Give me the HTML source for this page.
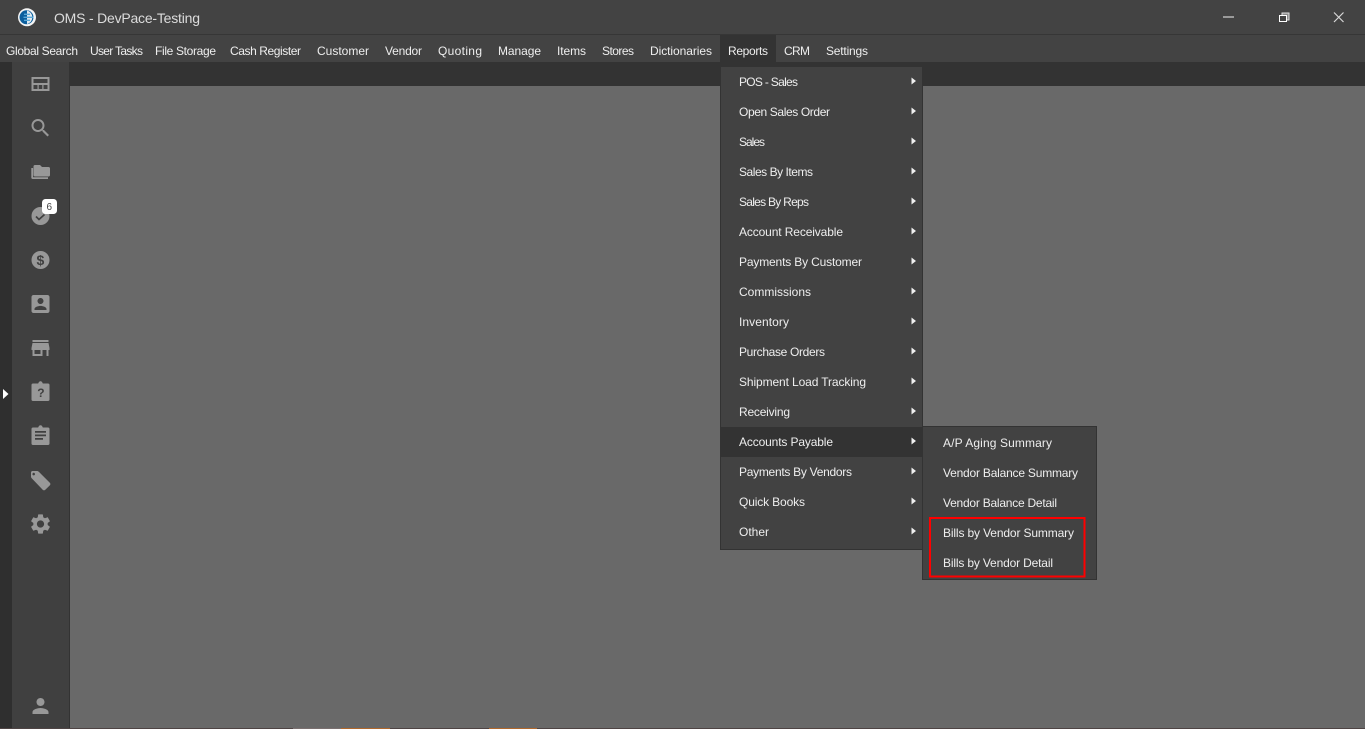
<!DOCTYPE html>
<html><head><meta charset="utf-8"><title>OMS - DevPace-Testing</title>
<style>
html,body{margin:0;padding:0;background:#696969;width:1365px;height:729px;overflow:hidden}
svg{display:block}
text{font-family:"Liberation Sans",sans-serif;font-size:12px;fill:#eeeeee}
.i{fill:#989898}
</style></head><body>
<svg width="1365" height="729" viewBox="0 0 1365 729" xmlns="http://www.w3.org/2000/svg">
<rect width="1365" height="729" fill="#696969"/>
<rect width="1365" height="34" fill="#434343"/>
<rect y="34" width="1365" height="1" fill="#363636"/>
<rect y="35" width="1365" height="27" fill="#434343"/>
<rect y="62" width="1365" height="24" fill="#333333"/>
<rect y="62" width="12" height="667" fill="#2f2f2f"/>
<rect x="12" y="62" width="57" height="667" fill="#404040"/>
<rect x="69" y="62" width="1" height="667" fill="#333333"/>
<rect y="728" width="1365" height="1" fill="#4e4444"/>
<rect x="293" y="728" width="48" height="1" fill="#7a7070"/>
<rect x="341" y="728" width="49" height="1" fill="#b0682c"/>
<rect x="489" y="728" width="48" height="1" fill="#b0682c"/>

<!-- logo -->
<circle cx="27" cy="17.300" r="9" fill="#f4f4f4"/>
<circle cx="26.500" cy="17.300" r="7" fill="#0c5f9e"/>
<path d="M27 10.500a7 7 0 0 1 0 13.600z" fill="#dfe9f0"/>
<path d="M24 14.300h6M23.500 17.300h10M24 20.300h6" stroke="#58a8d8" stroke-width="1.300" fill="none"/>
<text x="54" y="23" style="font-size:14px;fill:#dcdcdc" textLength="146">OMS - DevPace-Testing</text>

<!-- window controls -->
<rect x="1223" y="16" width="11" height="2" fill="#9a9a9a"/>
<rect x="1282" y="13" width="7" height="7" fill="#8a8a8a" stroke="#e0e0e0" stroke-width="1"/>
<rect x="1279.500" y="15.500" width="7" height="6" fill="#434343" stroke="#ffffff" stroke-width="1"/>
<path d="M1334 12.500l9.500 9.500M1343.500 12.500l-9.500 9.500" stroke="#d8d8d8" stroke-width="1.200" fill="none"/>

<!-- menu bar -->
<rect x="720" y="35" width="56" height="27" fill="#333333"/>
<text x="6" y="55" textLength="72">Global Search</text>
<text x="90" y="55" textLength="53">User Tasks</text>
<text x="155" y="55" textLength="61">File Storage</text>
<text x="230" y="55" textLength="71">Cash Register</text>
<text x="317" y="55" textLength="52">Customer</text>
<text x="385" y="55" textLength="37">Vendor</text>
<text x="438" y="55" textLength="44">Quoting</text>
<text x="498" y="55" textLength="43">Manage</text>
<text x="557" y="55" textLength="29">Items</text>
<text x="602" y="55" textLength="32">Stores</text>
<text x="650" y="55" textLength="62">Dictionaries</text>
<text x="728" y="55" textLength="40">Reports</text>
<text x="784" y="55" textLength="26">CRM</text>
<text x="826" y="55" textLength="42">Settings</text>

<!-- sidebar icons -->
<path class="i" fill-rule="evenodd" d="M31.500 77h18v14h-18zM33.500 79v4h14v-4zM33.500 85v4h4v-4zM38.700 85v4h3.600v-4zM43.500 85v4h4v-4z"/>
<g transform="translate(28.500,116)"><path class="i" d="M15.500 14h-.79l-.28-.27C15.410 12.590 16 11.110 16 9.500 16 5.910 13.090 3 9.500 3S3 5.910 3 9.500 5.910 16 9.500 16c1.610 0 3.090-.59 4.230-1.570l.27.28v.79l5 4.990L20.490 19l-4.990-5zm-6 0C7.010 14 5 11.990 5 9.500S7.010 5 9.500 5 14 7.010 14 9.500 11.990 14 9.500 14z"/></g>
<path class="i" d="M31.300 168h1.800v9.200h14.900v1.800h-15.200c-.9 0-1.500-.6-1.500-1.500zM35 165h5l2 2h6.500c.9 0 1.500.6 1.500 1.500v6.500c0 .9-.6 1.500-1.500 1.500h-13.500c-.9 0-1.500-.6-1.500-1.500v-8.500c0-.9.6-1.500 1.500-1.500z"/>
<circle class="i" cx="40.500" cy="216" r="9"/>
<path d="M36 216.500l3 3 5.500-5" stroke="#404040" stroke-width="1.700" fill="none"/>
<rect x="42" y="199" width="15" height="15" rx="3.500" fill="#ffffff"/>
<text x="46.500" y="210" style="font-size:10px;fill:#444">6</text>
<circle class="i" cx="40.500" cy="260" r="9"/>
<text x="36.500" y="265" style="font-size:14px;font-weight:bold;fill:#404040">$</text>
<g transform="translate(28.500,292)"><path class="i" d="M3 5v14c0 1.100.89 2 2 2h14c1.100 0 2-.9 2-2V5c0-1.100-.9-2-2-2H5c-1.110 0-2 .9-2 2zm12 4c0 1.660-1.340 3-3 3s-3-1.340-3-3 1.340-3 3-3 3 1.340 3 3zm-9 8c0-2 4-3.100 6-3.100s6 1.100 6 3.100v1H6v-1z"/></g>
<g transform="translate(28.500,336)"><path class="i" d="M20 4H4v2h16V4zm1 10v-2l-1-5H4l-1 5v2h1v6h10v-6h4v6h2v-6h1zm-9 4H6v-4h6v4z"/></g>
<path class="i" d="M33 383.500h5.200c.4-1.400 1.200-2.300 2.300-2.300s1.900.9 2.300 2.300H48c.9 0 1.500.6 1.500 1.500v14.500c0 .9-.6 1.500-1.500 1.500H33c-.9 0-1.500-.6-1.500-1.500V385c0-.9.6-1.500 1.500-1.500z"/>
<text x="37.200" y="397" style="font-size:12px;font-weight:bold;fill:#404040">?</text>
<path class="i" fill-rule="evenodd" d="M33 427.500h5.200c.4-1.400 1.200-2.300 2.300-2.300s1.900.9 2.300 2.300H48c.9 0 1.500.6 1.500 1.500v14.500c0 .9-.6 1.500-1.500 1.500H33c-.9 0-1.500-.6-1.500-1.500V429c0-.9.6-1.500 1.500-1.500zM35 431v1.800h11V431zM35 434.500v1.800h11v-1.800zM35 438v1.800h8V438z"/>
<path class="i" fill-rule="evenodd" d="M32.500 471H37c.7 0 1.300.3 1.800.8l11 11c.8.8.8 1.800 0 2.600l-4.500 4.300c-.8.8-1.800.8-2.600 0l-11-11.500c-.5-.5-.7-1-.7-1.700v-3.900c0-.9.6-1.600 1.500-1.600zM33.700 472.800a1.300 1.300 0 1 0 .01 0z"/>
<g transform="translate(28.500,512)"><path class="i" d="M19.140 12.940c.04-.3.06-.61.06-.94 0-.32-.02-.64-.07-.94l2.030-1.580c.18-.14.23-.41.12-.61l-1.920-3.320c-.12-.22-.37-.29-.59-.22l-2.390.96c-.5-.38-1.030-.7-1.620-.94l-.36-2.540c-.04-.24-.24-.41-.48-.41h-3.840c-.24 0-.43.17-.47.41l-.36 2.540c-.59.24-1.130.57-1.620.94l-2.390-.96c-.22-.08-.47 0-.59.22L2.740 8.870c-.12.21-.08.47.12.61l2.030 1.580c-.05.3-.09.63-.09.94s.02.64.07.94l-2.030 1.580c-.18.14-.23.41-.12.61l1.920 3.320c.12.22.37.29.59.22l2.390-.96c.5.38 1.030.7 1.620.94l.36 2.540c.05.24.24.41.48.41h3.840c.24 0 .44-.17.47-.41l.36-2.540c.59-.24 1.130-.56 1.620-.94l2.390.96c.22.08.47 0 .59-.22l1.920-3.320c.12-.22.07-.47-.12-.61l-2.010-1.580zM12 15.600c-1.980 0-3.600-1.620-3.600-3.600s1.620-3.600 3.600-3.600 3.600 1.620 3.600 3.600-1.620 3.600-3.600 3.600z"/></g>
<g transform="translate(28.500,694)"><path class="i" d="M12 12c2.210 0 4-1.790 4-4s-1.790-4-4-4-4 1.790-4 4 1.790 4 4 4zm0 2c-2.670 0-8 1.340-8 4v2h16v-2c0-2.660-5.330-4-8-4z"/></g>
<path d="M3 389l5.500 5-5.500 5z" fill="#ffffff"/>

<!-- reports menu -->
<rect x="720.500" y="66.500" width="202" height="483" fill="#424242" stroke="#333333"/>
<rect x="721" y="427" width="201" height="30" fill="#333333"/>
<text x="739" y="86" textLength="59">POS - Sales</text>
<text x="739" y="116" textLength="91">Open Sales Order</text>
<text x="739" y="146" textLength="26">Sales</text>
<text x="739" y="176" textLength="74">Sales By Items</text>
<text x="739" y="206" textLength="70">Sales By Reps</text>
<text x="739" y="236" textLength="104">Account Receivable</text>
<text x="739" y="266" textLength="123">Payments By Customer</text>
<text x="739" y="296" textLength="72">Commissions</text>
<text x="739" y="326" textLength="50">Inventory</text>
<text x="739" y="356" textLength="86">Purchase Orders</text>
<text x="739" y="386" textLength="127">Shipment Load Tracking</text>
<text x="739" y="416" textLength="51">Receiving</text>
<text x="739" y="446" textLength="94">Accounts Payable</text>
<text x="739" y="476" textLength="113">Payments By Vendors</text>
<text x="739" y="506" textLength="66">Quick Books</text>
<text x="739" y="536" textLength="30">Other</text>
<g fill="#f0f0f0">
<path d="M911.500 77.500l4.500 3.500-4.500 3.500z"/><path d="M911.500 107.500l4.500 3.500-4.500 3.500z"/><path d="M911.500 137.500l4.500 3.500-4.500 3.500z"/><path d="M911.500 167.500l4.500 3.500-4.500 3.500z"/>
<path d="M911.500 197.500l4.500 3.500-4.500 3.500z"/><path d="M911.500 227.500l4.500 3.500-4.500 3.500z"/><path d="M911.500 257.500l4.500 3.500-4.500 3.500z"/><path d="M911.500 287.500l4.500 3.500-4.500 3.500z"/>
<path d="M911.500 317.500l4.500 3.500-4.500 3.500z"/><path d="M911.500 347.500l4.500 3.500-4.500 3.500z"/><path d="M911.500 377.500l4.500 3.500-4.500 3.500z"/><path d="M911.500 407.500l4.500 3.500-4.500 3.500z"/>
<path d="M911.500 437.500l4.500 3.500-4.500 3.500z"/><path d="M911.500 467.500l4.500 3.500-4.500 3.500z"/><path d="M911.500 497.500l4.500 3.500-4.500 3.500z"/><path d="M911.500 527.500l4.500 3.500-4.500 3.500z"/>
</g>

<!-- submenu -->
<rect x="922.500" y="426.500" width="174" height="153" fill="#424242" stroke="#333333"/>
<text x="943" y="447" textLength="109">A/P Aging Summary</text>
<text x="943" y="477" textLength="135">Vendor Balance Summary</text>
<text x="943" y="507" textLength="114">Vendor Balance Detail</text>
<text x="943" y="537" textLength="131">Bills by Vendor Summary</text>
<text x="943" y="567" textLength="110">Bills by Vendor Detail</text>
<rect x="930" y="518" width="154.500" height="58.500" fill="none" stroke="#ff0000" stroke-width="2"/>
</svg>
</body></html>
